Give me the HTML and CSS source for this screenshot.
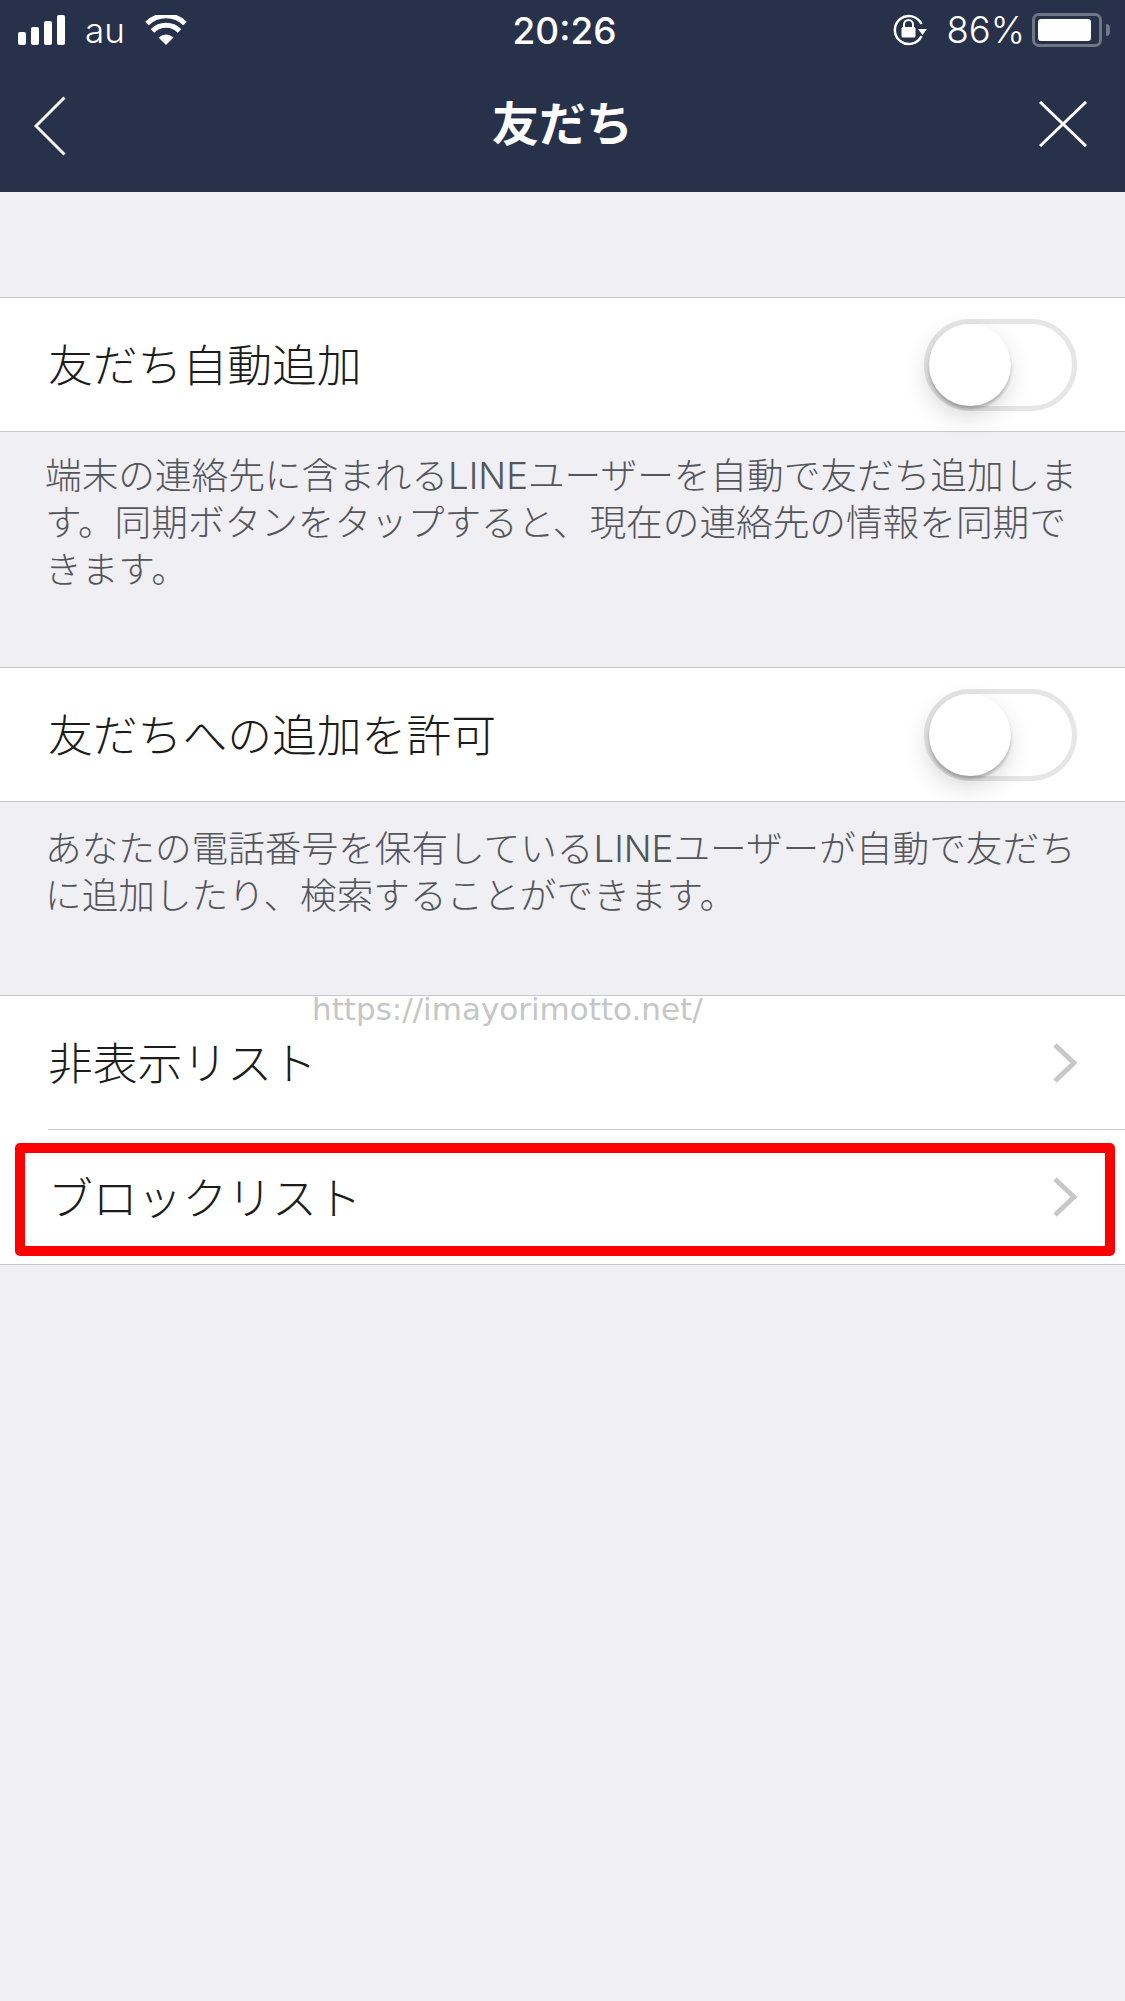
FILE: index.html
```html
<!DOCTYPE html>
<html lang="ja">
<head>
    <meta charset="UTF-8">
    <title>友だち</title>
    <link rel="stylesheet" href="styles.css">
</head>
<body>
<div class="top">
    <div class="status">
        <div class="status-left">
            <div class="signal">
                <span class="bar b1"></span>
                <span class="bar b2"></span>
                <span class="bar b3"></span>
                <span class="bar b4"></span>
            </div>
            <span class="carrier">au</span>
            <svg class="wifi" width="42" height="30" viewBox="0 0 42 30">
                <path d="M21 30 L13.500 22.500 Q21 16.500 28.500 22.500 Z" fill="#fff"/>
                <path d="M7.500 16 A19 19 0 0 1 34.500 16" fill="none" stroke="#fff" stroke-width="5"/>
                <path d="M2 8.500 A27 27 0 0 1 40 8.500" fill="none" stroke="#fff" stroke-width="5"/>
            </svg>
        </div>
        <div class="time">20:26</div>
        <div class="status-right">
            <svg class="rotlock" width="36" height="32" viewBox="0 0 36 32">
                <path d="M29.500 22 A14 14 0 1 1 29.500 10" fill="none" stroke="#fff" stroke-width="2.500"/>
                <path d="M26 15 L35 15 L30.500 21 Z" fill="#fff"/>
                <rect x="9.500" y="13" width="14" height="10.500" rx="1.500" fill="#fff"/>
                <path d="M12 14 V10.500 A4.500 4.500 0 0 1 21 10.500 V14" fill="none" stroke="#fff" stroke-width="2"/>
            </svg>
            <span class="percent">86%</span>
            <div class="battery"><div class="battery-fill"></div></div>
            <div class="battery-nub"></div>
        </div>
    </div>
    <div class="nav">
        <svg class="nav-back" width="32" height="60" viewBox="0 0 32 60">
            <path d="M30.500 1.500 L2 30 L30.500 58.500" fill="none" stroke="#fff" stroke-width="3"/>
        </svg>
        <div class="nav-title">友だち</div>
        <svg class="nav-close" width="48" height="46" viewBox="0 0 48 46">
            <path d="M1 1 L47 45 M47 1 L1 45" fill="none" stroke="#fff" stroke-width="3"/>
        </svg>
    </div>
</div>

<div class="content">
    <div class="row toggle-row">
        <span class="label">友だち自動追加</span>
        <div class="toggle"><div class="thumb"></div></div>
    </div>
    <p class="desc">端末の連絡先に含まれるLINEユーザーを自動で友だち追加します。同期ボタンをタップすると、現在の連絡先の情報を同期できます。</p>

    <div class="row toggle-row">
        <span class="label">友だちへの追加を許可</span>
        <div class="toggle"><div class="thumb"></div></div>
    </div>
    <p class="desc desc-short">あなたの電話番号を保有しているLINEユーザーが自動で友だちに追加したり、検索することができます。</p>

    <div class="list">
        <div class="watermark">https://imayorimotto.net/</div>
        <div class="list-row">
            <div class="list-inner">
                <span class="label">非表示リスト</span>
                <svg class="chev" width="24" height="40" viewBox="0 0 24 40"><path d="M2 2 L21 20 L2 38" fill="none" stroke="#c8c7cc" stroke-width="5"/></svg>
            </div>
        </div>
        <div class="list-row last">
            <div class="list-inner">
                <span class="label">ブロックリスト</span>
                <svg class="chev" width="24" height="40" viewBox="0 0 24 40"><path d="M2 2 L21 20 L2 38" fill="none" stroke="#c8c7cc" stroke-width="5"/></svg>
            </div>
            <div class="highlight"></div>
        </div>
    </div>
</div>
</body>
</html>
```

FILE: styles.css
```css
*
{
    margin: 0;
    padding: 0;
    box-sizing: border-box;
}
html, body
{
    height: 100%;
}
body
{
    background: #efeff4;
    font-family: "Noto Sans CJK JP", "Liberation Sans", sans-serif;
    color: #1c1c1c;
    overflow: hidden;
}
.top
{
    height: 192px;
    background: #273149;
    color: #fff;
}
.status
{
    height: 60px;
    display: grid;
    grid-template-columns: 1fr auto 1fr;
    align-items: center;
    padding: 0 15px 0 18px;
}
.status-left
{
    display: flex;
    align-items: center;
}
.signal
{
    display: flex;
    align-items: flex-end;
    gap: 5px;
    height: 30px;
}
.bar
{
    width: 8px;
    background: #fff;
    border-radius: 2px;
}
.b1 { height: 13px; }
.b2 { height: 18px; }
.b3 { height: 24px; }
.b4 { height: 30px; }
.carrier
{
    font-family: Inter, sans-serif;
    font-weight: 300;
    font-size: 35px;
    margin-left: 20px;
}
.wifi
{
    margin-left: 20px;
}
.time
{
    font-family: Inter, sans-serif;
    font-weight: 500;
    font-size: 37px;
    margin-left: 1px;
}
.status-right
{
    display: flex;
    align-items: center;
    justify-content: flex-end;
}
.percent
{
    font-family: Inter, sans-serif;
    font-weight: 300;
    font-size: 36.500px;
    margin: 0 7px 0 19px;
}
.battery
{
    width: 70px;
    height: 34px;
    border: 3px solid #6f7686;
    border-radius: 7px;
    padding: 3px;
}
.battery-fill
{
    width: 53px;
    height: 100%;
    background: #fff;
    border-radius: 3px;
}
.battery-nub
{
    width: 4px;
    height: 12px;
    background: #6f7686;
    margin-left: 4px;
    border-radius: 0 6px 6px 0;
}
.nav
{
    height: 132px;
    display: flex;
    align-items: center;
    justify-content: space-between;
    padding: 0 38px 6px 34px;
}
.nav-back
{
    margin-top: 5px;
}
.nav-close
{
    margin-top: 2px;
}
.nav-title
{
    font-size: 47px;
    font-weight: 700;
    margin: 0 0 5px 20px;
}
.content
{
    padding-top: 105px;
}
.row, .list-inner
{
    font-size: 44.800px;
    font-weight: 300;
}
.label
{
    margin-bottom: 4px;
}
.toggle-row
{
    height: 135px;
    background: #fff;
    border-top: 1px solid #c8c7cc;
    border-bottom: 1px solid #c8c7cc;
    display: flex;
    align-items: center;
    justify-content: space-between;
    padding: 0 48px;
}
.toggle
{
    width: 153px;
    height: 92px;
    border: 5px solid #e6e6e6;
    border-radius: 46px;
}
.thumb
{
    width: 82px;
    height: 82px;
    border-radius: 50%;
    background: #fff;
    box-shadow: 0 3px 3px rgba(0, 0, 0, 0.22), -2px 10px 24px rgba(0, 0, 0, 0.16);
}
.desc
{
    font-family: Inter, "Noto Sans CJK JP", sans-serif;
    font-size: 36.650px;
    font-weight: 300;
    line-height: 47px;
    color: #55555c;
    padding: 20px 36px 74px 45px;
}
.desc-short
{
    padding-top: 23px;
    padding-bottom: 76px;
}
.list
{
    position: relative;
    background: #fff;
    border-top: 1px solid #c8c7cc;
    border-bottom: 1px solid #c8c7cc;
}
.list-row
{
    position: relative;
    padding-left: 48px;
}
.list-inner
{
    height: 134px;
    display: flex;
    align-items: center;
    justify-content: space-between;
    padding-right: 48px;
    border-bottom: 1px solid #c8c7cc;
}
.last .list-inner
{
    border-bottom: 0;
}
.chev
{
    display: block;
}
.watermark
{
    position: absolute;
    top: -2px;
    left: 312px;
    font-family: "DejaVu Sans", sans-serif;
    font-size: 31px;
    line-height: 30px;
    color: #c6c6c6;
}
.highlight
{
    position: absolute;
    top: 13px;
    left: 15px;
    width: 1100px;
    height: 113px;
    border: 10px solid #ff0000;
    border-radius: 5px;
}
```
